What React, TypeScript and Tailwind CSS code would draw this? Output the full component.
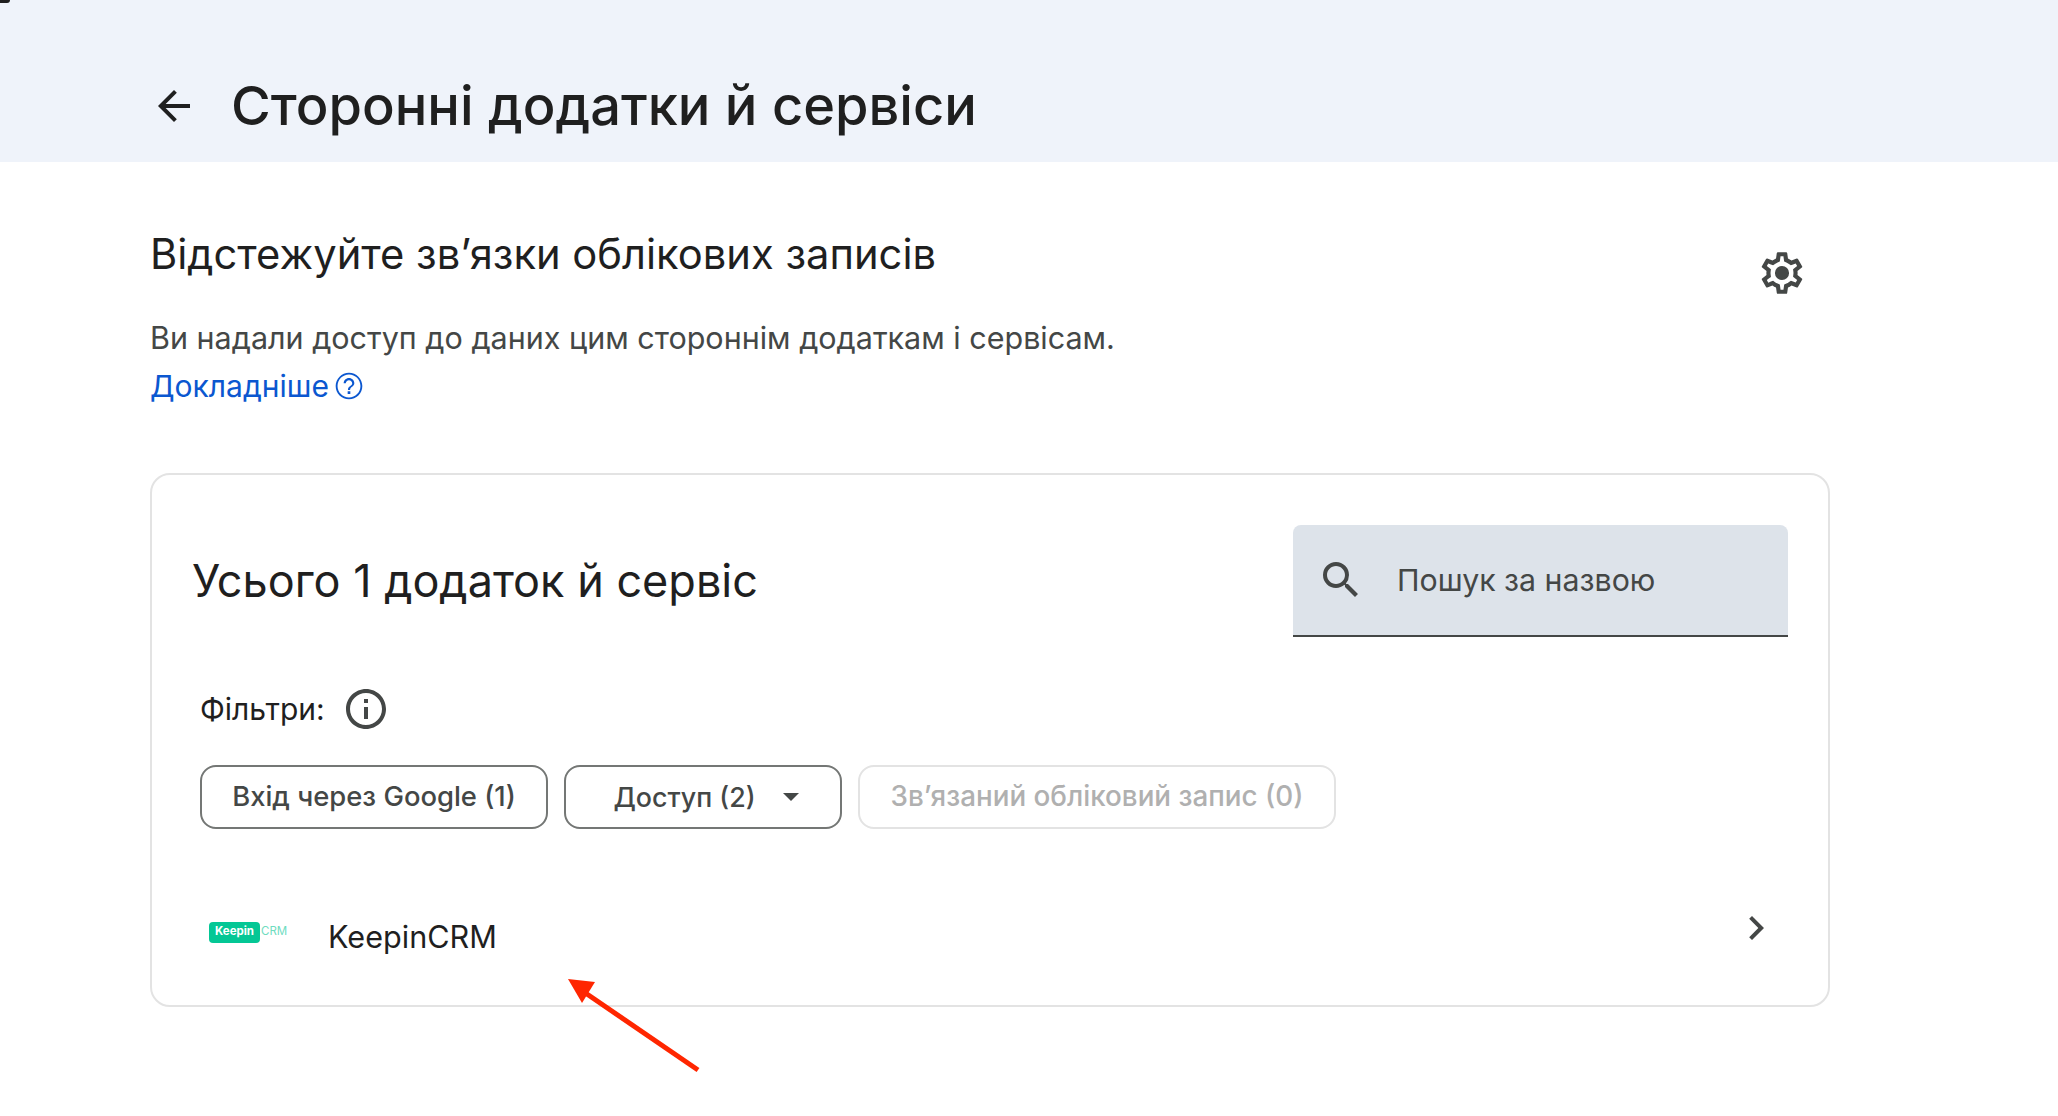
import { ReactNode } from 'react';

const FONT = "font-['Inter','Noto_Sans',sans-serif]";

function Icon({ d, className }: { d: string; className: string }) {
  return (
    <svg viewBox="0 0 24 24" fill="currentColor" className={className}>
      <path d={d} />
    </svg>
  );
}

const ARROW_BACK = 'M20 11H7.83l5.59-5.59L12 4l-8 8 8 8 1.41-1.41L7.83 13H20v-2z';
const SEARCH =
  'M15.5 14h-.79l-.28-.27A6.471 6.471 0 0 0 16 9.5 6.5 6.5 0 1 0 9.5 16c1.61 0 3.09-.59 4.23-1.57l.27.28v.79l5 4.99L20.49 19l-4.99-5zm-6 0C7.01 14 5 11.99 5 9.5S7.01 5 9.5 5 14 7.01 14 9.5 11.99 14 9.5 14z';
const INFO =
  'M11 7h2v2h-2zm0 4h2v6h-2zm1-9C6.48 2 2 6.48 2 12s4.48 10 10 10 10-4.48 10-10S17.52 2 12 2zm0 18c-4.41 0-8-3.59-8-8s3.59-8 8-8 8 3.59 8 8-3.59 8-8 8z';
const HELP =
  'M11 18h2v-2h-2v2zm1-16C6.48 2 2 6.48 2 12s4.48 10 10 10 10-4.48 10-10S17.52 2 12 2zm0 18.6c-4.74 0-8.6-3.86-8.6-8.6S7.26 3.4 12 3.4s8.6 3.86 8.6 8.6-3.86 8.6-8.6 8.6zM12 6c-2.21 0-4 1.79-4 4h1.6c0-1.32 1.08-2.4 2.4-2.4s2.4 1.08 2.4 2.4c0 2.2-3.2 2-3.2 5h1.6c0-2.25 3.2-2.5 3.2-5 0-2.21-1.79-4-4-4z';
const GEAR =
  'M19.43 12.98c.04-.32.07-.64.07-.98 0-.34-.03-.66-.07-.98l2.11-1.65c.19-.15.24-.42.12-.64l-2-3.46c-.09-.16-.26-.25-.44-.25-.06 0-.12.01-.17.03l-2.49 1c-.52-.4-1.08-.73-1.69-.98l-.38-2.65C14.46 2.18 14.25 2 14 2h-4c-.25 0-.46.18-.49.42l-.38 2.65c-.61.25-1.17.59-1.69.98l-2.49-1c-.06-.02-.12-.03-.18-.03-.17 0-.34.09-.43.25l-2 3.46c-.13.22-.07.49.12.64l2.11 1.65c-.04.32-.07.65-.07.98 0 .33.03.66.07.98l-2.11 1.65c-.19.15-.24.42-.12.64l2 3.46c.09.16.26.25.44.25.06 0 .12-.01.17-.03l2.49-1c.52.4 1.08.73 1.69.98l.38 2.65c.03.24.24.42.49.42h4c.25 0 .46-.18.49-.42l.38-2.65c.61-.25 1.17-.59 1.69-.98l2.49 1c.06.02.12.03.18.03.17 0 .34-.09.43-.25l2-3.46c.12-.22.07-.49-.12-.64l-2.11-1.65zm-1.98-1.71c.04.31.05.52.05.73 0 .21-.02.43-.05.73l-.14 1.13.89.7 1.08.84-.7 1.21-1.27-.51-1.04-.42-.9.68c-.43.32-.84.56-1.25.73l-1.06.43-.16 1.13-.2 1.35h-1.4l-.19-1.35-.16-1.13-1.06-.43c-.43-.18-.83-.41-1.23-.71l-.91-.7-1.06.43-1.27.51-.7-1.21 1.08-.84.89-.7-.14-1.13c-.03-.31-.05-.54-.05-.74s.02-.43.05-.73l.14-1.13-.89-.7-1.08-.84.7-1.21 1.27.51 1.04.42.9-.68c.43-.32.84-.56 1.25-.73l1.06-.43.16-1.13.2-1.35h1.39l.19 1.35.16 1.13 1.06.43c.43.18.83.41 1.23.71l.91.7 1.06-.43 1.27-.51.7 1.21-1.07.85-.89.7.14 1.13zM12 8.6a3.4 3.4 0 1 0 0 6.8 3.4 3.4 0 0 0 0-6.8z';
const CHEVRON = 'M10 6 8.59 7.41 13.17 12l-4.58 4.59L10 18l6-6z';

function Chip({ children, disabled, className }: { children: ReactNode; disabled?: boolean; className: string }) {
  return (
    <div
      className={`h-16 rounded-2xl border-2 flex items-center justify-center font-medium ${
        disabled ? 'border-[#e3e3e3] text-[#b0b0b0]' : 'border-[#747775] text-[#444746]'
      } ${className}`}
    >
      {children}
    </div>
  );
}

export default function App() {
  return (
    <div className={`relative min-h-screen bg-white overflow-hidden ${FONT}`}>
      <header className="h-[162px] bg-[#eff3fa] flex items-center pl-[150px] pt-[48px]">
        <Icon d={ARROW_BACK} className="w-[48px] h-[48px] text-[#1f1f1f] mt-[2px]" />
        <h1 className="ml-[33px] text-[54.2px] leading-[64px] text-[#1f1f1f] font-medium">Сторонні додатки й сервіси</h1>
      </header>

      <main className="pl-[150px] pr-[228px] pt-[66px]">
        <div className="flex justify-between">
          <div>
            <h2 className="text-[41.7px] leading-[52px] text-[#1f1f1f]">Відстежуйте зв’язки облікових записів</h2>
            <p className="mt-[34px] text-[30.5px] leading-[48px] text-[#444746]">
              Ви надали доступ до даних цим стороннім додаткам і сервісам.
            </p>
            <a className="flex items-center text-[30px] leading-[48px] text-[#0b57d0]">
              Докладніше
              <Icon d={HELP} className="ml-[4px] w-[32px] h-[32px]" />
            </a>
          </div>
          <Icon d={GEAR} className="mt-[20px] mr-[23px] w-[50px] h-[50px] text-[#444746]" />
        </div>

        <section className="mt-[63px] h-[534px] rounded-[20px] border-2 border-[#e3e3e3] px-[40px] pt-[50px] relative">
          <div className="flex justify-between items-center">
            <h3 className="text-[45px] leading-[56px] text-[#1f1f1f]">Усього 1 додаток й сервіс</h3>
            <div className="w-[495px] h-[112px] rounded-t-lg bg-[#dde3ea] border-b-2 border-[#444746] flex items-center pl-[24px]">
              <Icon d={SEARCH} className="w-[48px] h-[48px] text-[#444746]" />
              <span className="ml-[32px] mt-[2px] text-[30.3px] text-[#444746]">Пошук за назвою</span>
            </div>
          </div>

          <div className="mt-[48px] pl-[8px] flex items-center">
            <span className="text-[30px] leading-[48px] text-[#1f1f1f]">Фільтри:</span>
            <Icon d={INFO} className="ml-[17px] w-[48px] h-[48px] text-[#444746]" />
          </div>

          <div className="mt-[32px] pl-[8px] flex gap-[16px]">
            <Chip className="w-[348px] text-[27.4px]">Вхід через Google (1)</Chip>
            <Chip className="w-[278px] pl-[6px] text-[26.8px]">
              Доступ (2)
              <span className="ml-[27px] border-x-[8px] border-t-[8px] border-x-transparent border-t-[#444746]" />
            </Chip>
            <Chip disabled className="w-[478px] text-[27.8px]">
              Зв’язаний обліковий запис (0)
            </Chip>
          </div>

          <div className="mt-[84px] pl-[17px] flex items-center">
            <div className="w-[79px] -mt-[10px] flex items-center">
              <span className="h-[21px] w-[51px] rounded-[4px] bg-[#04c795] text-white text-[11.5px] font-bold flex items-center justify-center">
                Keepin
              </span>
              <span className="ml-[1px] text-[#6fdcbf] text-[11.5px]">CRM</span>
            </div>
            <span className="ml-[40px] text-[30.6px] leading-[48px] text-[#1f1f1f]">KeepinCRM</span>
            <Icon d={CHEVRON} className="ml-auto -mt-[18px] mr-[8px] w-[48px] h-[48px] text-[#444746]" />
          </div>
        </section>
      </main>

      {/* clipped speck in the top corner of the screenshot */}
      <div className="absolute left-0 top-0 w-[10px] h-[3px] rounded-br-[3px] bg-[#1f1f1f]" />

      {/* red annotation arrow */}
      <svg className="absolute left-[560px] top-[970px] w-[150px] h-[110px]" viewBox="0 0 150 110">
        <line x1="138" y1="100" x2="24" y2="22" stroke="#ff2600" strokeWidth="5" />
        <polygon points="8,9 35,12 22,33" fill="#ff2600" />
      </svg>
    </div>
  );
}
